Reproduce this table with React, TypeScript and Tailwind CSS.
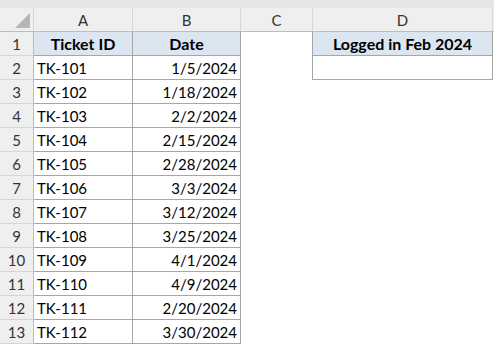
import React from "react";

interface TicketRow {
  id: string;
  date: string;
}

const tickets: TicketRow[] = [
  { id: "TK-101", date: "1/5/2024" },
  { id: "TK-102", date: "1/18/2024" },
  { id: "TK-103", date: "2/2/2024" },
  { id: "TK-104", date: "2/15/2024" },
  { id: "TK-105", date: "2/28/2024" },
  { id: "TK-106", date: "3/3/2024" },
  { id: "TK-107", date: "3/12/2024" },
  { id: "TK-108", date: "3/25/2024" },
  { id: "TK-109", date: "4/1/2024" },
  { id: "TK-110", date: "4/9/2024" },
  { id: "TK-111", date: "2/20/2024" },
  { id: "TK-112", date: "3/30/2024" },
];

const RowNum = ({ n }: { n: number }) => (
  <div className="flex h-[24px] w-[34px] shrink-0 items-center justify-center border-r border-b border-r-[#bdbdbd] border-b-[#d6d6d6] bg-[#efefef] text-[15px] font-normal text-[#333]">
    {n}
  </div>
);

const App = () => {
  return (
    <div
      className="h-[345px] w-[494px] overflow-hidden bg-white text-[15px] leading-[18px] text-black"
      style={{ fontFamily: "Lato, 'Open Sans', sans-serif" }}
    >
      {/* ribbon edge */}
      <div className="h-[8px] bg-[#e6e6e6]" />

      {/* column letters */}
      <div className="flex h-[24px] border-b border-[#bdbdbd] bg-[#efefef] text-[#333]">
        <div className="relative w-[34px] shrink-0 border-r border-[#d6d6d6]">
          <svg className="absolute left-0 top-0" width="34" height="23" viewBox="0 0 34 23">
            <polygon points="30,5 30,20 15,20" fill="#b5b5b5" />
          </svg>
        </div>
        <div className="flex w-[99px] shrink-0 items-center justify-center border-r border-[#d6d6d6]">A</div>
        <div className="flex w-[108px] shrink-0 items-center justify-center border-r border-[#d6d6d6]">B</div>
        <div className="flex w-[72px] shrink-0 items-center justify-center border-r border-[#d6d6d6]">C</div>
        <div className="flex w-[180px] shrink-0 items-center justify-center border-r border-[#d6d6d6]">D</div>
        <div className="flex-1" />
      </div>

      {/* row 1 */}
      <div className="flex text-[16px]">
        <RowNum n={1} />
        <div className="flex h-[24px] w-[99px] shrink-0 items-center justify-center border-r border-b border-[#a6a6a6] bg-[#dce6f1] font-bold">
          Ticket ID
        </div>
        <div className="flex h-[24px] w-[108px] shrink-0 items-center justify-center border-r border-b border-[#a6a6a6] bg-[#dce6f1] font-bold">
          Date
        </div>
        <div className="h-[24px] w-[72px] shrink-0 border-r border-[#a6a6a6]" />
        <div className="flex h-[24px] w-[180px] shrink-0 items-center justify-center border-r border-b border-[#a6a6a6] bg-[#dce6f1] font-bold">
          Logged in Feb 2024
        </div>
      </div>

      {tickets.map((t, i) => (
        <div key={t.id} className="flex">
          <RowNum n={i + 2} />
          <div className="flex h-[24px] w-[99px] shrink-0 items-center border-r border-b border-[#a6a6a6] pl-[3px]">
            {t.id}
          </div>
          <div className="flex h-[24px] w-[108px] shrink-0 items-center justify-end border-r border-b border-[#a6a6a6] pr-[3px]">
            {t.date}
          </div>
          {i === 0 ? (
            <>
              <div className="h-[24px] w-[72px] shrink-0 border-r border-[#a6a6a6]" />
              <div className="h-[24px] w-[180px] shrink-0 border-r border-b border-[#a6a6a6]" />
            </>
          ) : null}
        </div>
      ))}
    </div>
  );
};

export default App;
